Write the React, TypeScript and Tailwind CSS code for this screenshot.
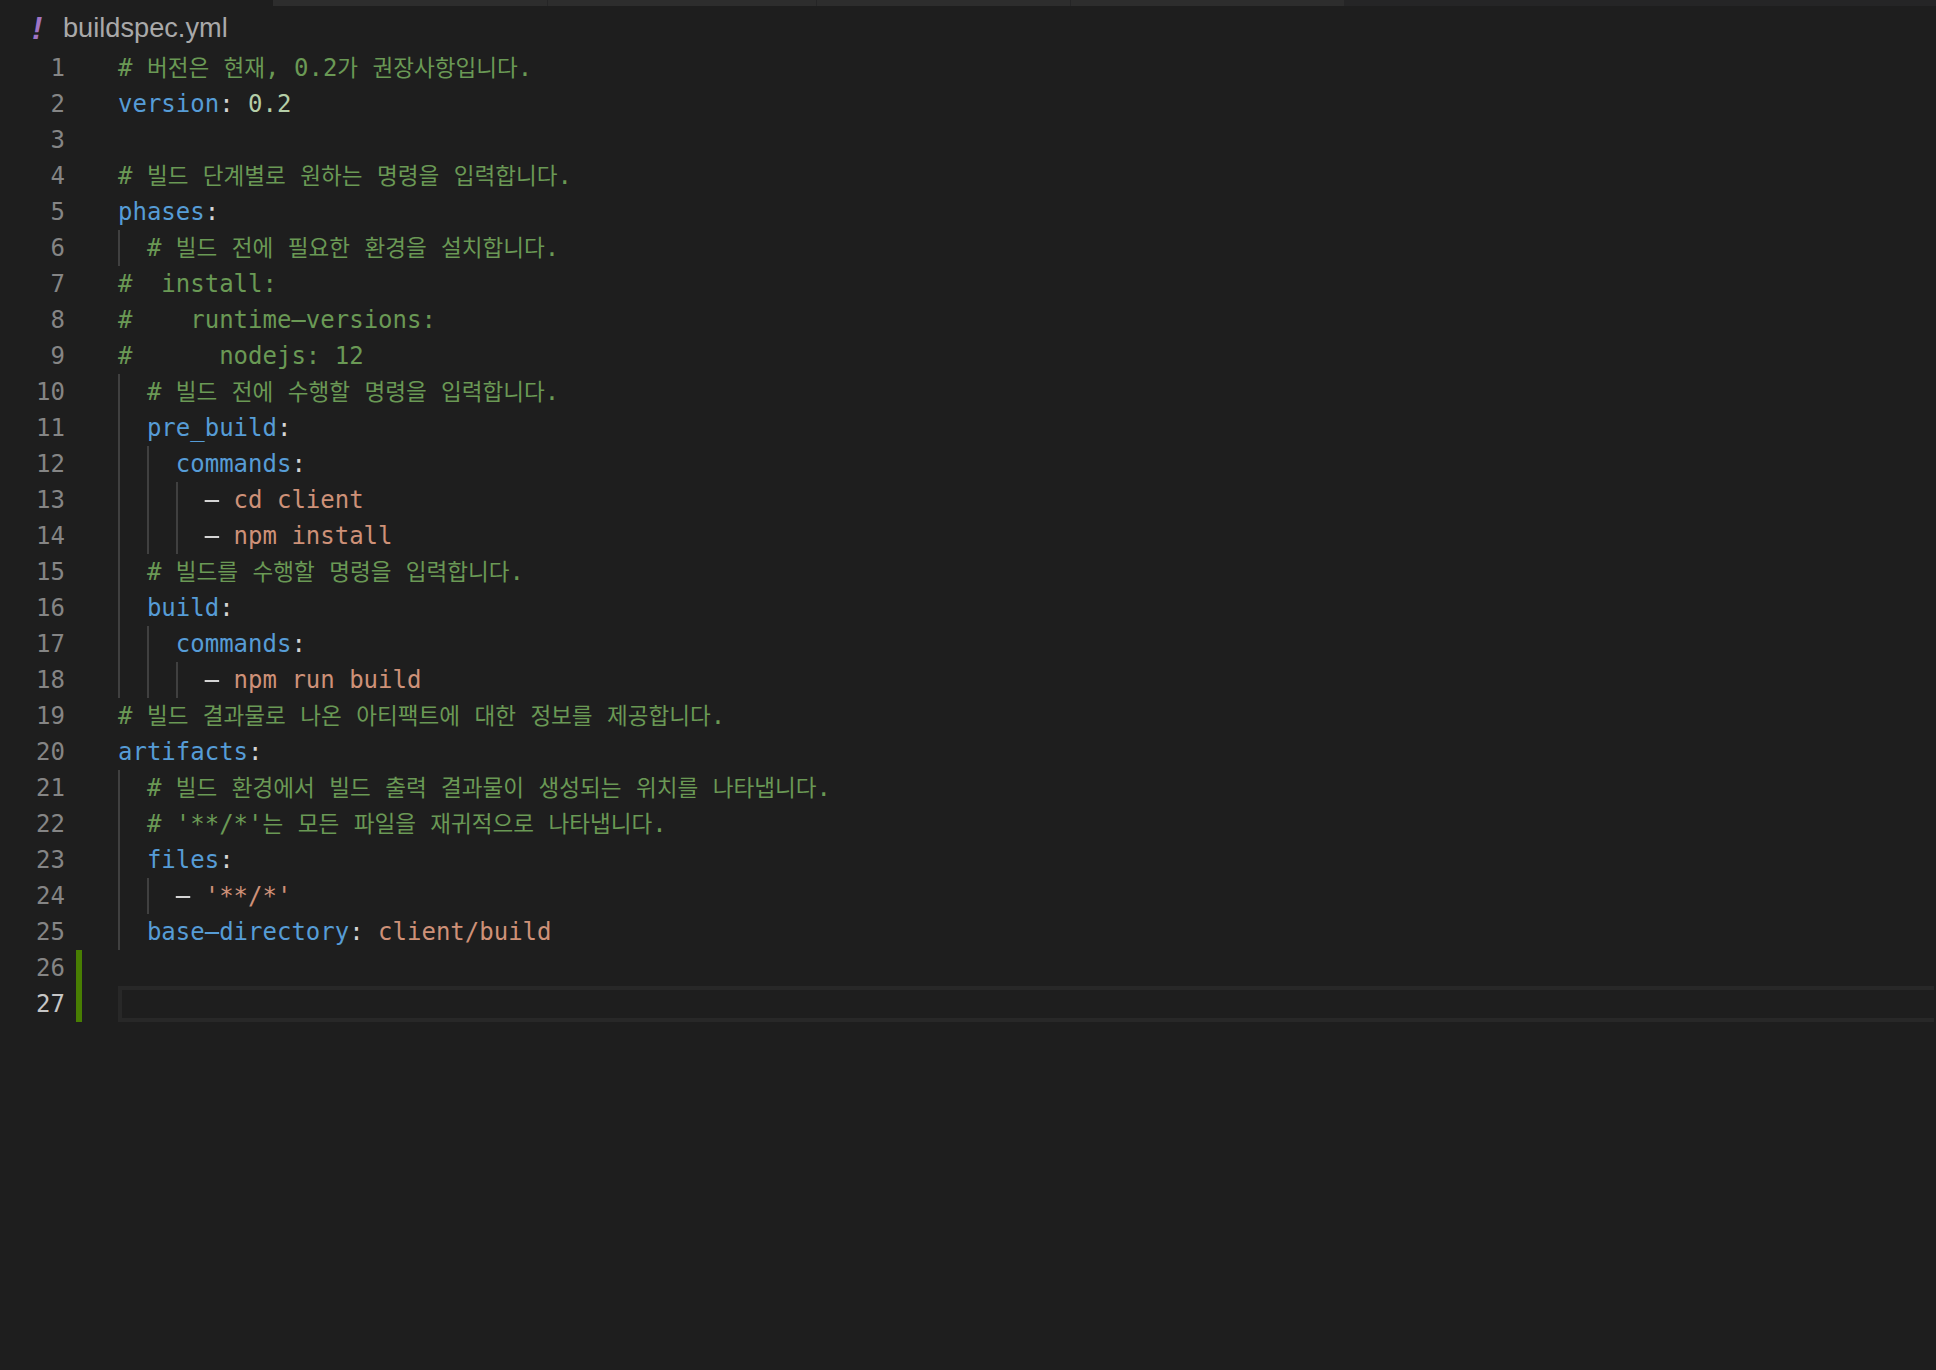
import React from "react";

const K = "text-[#569cd6]";
const C = "text-[#6a9955]";
const P = "text-[#d4d4d4]";
const S = "text-[#ce9178]";
const N = "text-[#b5cea8]";

type Seg = [string, string];
type Line = { guides?: number; parts?: Seg[] };

const lines: Line[] = [
  { parts: [["# 버전은 현재, 0.2가 권장사항입니다.", C]] },
  { parts: [["version", K], [": ", P], ["0.2", N]] },
  {},
  { parts: [["# 빌드 단계별로 원하는 명령을 입력합니다.", C]] },
  { parts: [["phases", K], [":", P]] },
  { guides: 1, parts: [["# 빌드 전에 필요한 환경을 설치합니다.", C]] },
  { parts: [["#  install:", C]] },
  { parts: [["#    runtime-versions:", C]] },
  { parts: [["#      nodejs: 12", C]] },
  { guides: 1, parts: [["# 빌드 전에 수행할 명령을 입력합니다.", C]] },
  { guides: 1, parts: [["pre_build", K], [":", P]] },
  { guides: 2, parts: [["commands", K], [":", P]] },
  { guides: 3, parts: [["- ", P], ["cd client", S]] },
  { guides: 3, parts: [["- ", P], ["npm install", S]] },
  { guides: 1, parts: [["# 빌드를 수행할 명령을 입력합니다.", C]] },
  { guides: 1, parts: [["build", K], [":", P]] },
  { guides: 2, parts: [["commands", K], [":", P]] },
  { guides: 3, parts: [["- ", P], ["npm run build", S]] },
  { parts: [["# 빌드 결과물로 나온 아티팩트에 대한 정보를 제공합니다.", C]] },
  { parts: [["artifacts", K], [":", P]] },
  { guides: 1, parts: [["# 빌드 환경에서 빌드 출력 결과물이 생성되는 위치를 나타냅니다.", C]] },
  { guides: 1, parts: [["# '**/*'는 모든 파일을 재귀적으로 나타냅니다.", C]] },
  { guides: 1, parts: [["files", K], [":", P]] },
  { guides: 2, parts: [["- ", P], ["'**/*'", S]] },
  { guides: 1, parts: [["base-directory", K], [": ", P], ["client/build", S]] },
  {},
  {},
];

function Runs({ text }: { text: string }) {
  const runs = text.split(/([\uac00-\ud7a3]+|-)/);
  return (
    <>
      {runs.map((r, i) =>
        i % 2 === 0 ? (
          <span key={i}>{r}</span>
        ) : r === "-" ? (
          <span key={i} className="line-through decoration-2">
            {r}
          </span>
        ) : (
          <span key={i} className="font-['Noto_Sans_CJK_KR',sans-serif] text-[22.55px] leading-[0]">
            {r}
          </span>
        )
      )}
    </>
  );
}

export default function App() {
  return (
    <div className="h-[1370px] w-[1936px] overflow-hidden bg-[#1e1e1e]">
      <div className="flex h-[6px] bg-[#252526]">
        <div className="w-[273px] bg-[#1e1e1e]" />
        <div className="w-[275px] border-r border-[#252526] bg-[#2d2d2d]" />
        <div className="w-[269px] border-r border-[#252526] bg-[#2d2d2d]" />
        <div className="w-[254px] border-r border-[#252526] bg-[#2d2d2d]" />
        <div className="w-[273px] bg-[#2d2d2d]" />
      </div>
      <div className="flex h-[44px] items-center">
        <span className="ml-[32px] w-[31px] font-['Liberation_Sans',sans-serif] text-[31px] font-bold italic leading-none text-[#a074c4]">
          !
        </span>
        <span className="font-['Liberation_Sans',sans-serif] text-[27.2px] leading-none text-[#a9a9a9]">
          buildspec.yml
        </span>
      </div>
      <div className="font-['DejaVu_Sans_Mono','Noto_Sans_CJK_KR',monospace] text-[24px] leading-[36px]">
        {lines.map((l, i) => {
          const n = i + 1;
          const active = n === 27;
          const changed = n >= 26;
          const guides = Array.from({ length: l.guides ?? 0 });
          return (
            <div key={n} className="flex h-[36px] whitespace-pre">
              <div
                className={`w-[65px] text-right ${active ? "text-[#c6c6c6]" : "text-[#858585]"}`}
              >
                {n}
              </div>
              <div className="ml-[11px] w-[6px]">
                {changed && <div className="h-full bg-[#487e02]" />}
              </div>
              {active ? (
                <div className="ml-[36px] w-[1816px] border-4 border-r-0 border-[#282828]" />
              ) : (
                <div className="ml-[36px] flex">
                  {guides.map((_, g) => (
                    <div key={g} className="w-[28.9px] border-l-2 border-[#404040]" />
                  ))}
                  <div>
                    {l.parts?.map(([t, c], j) => (
                      <span key={j} className={c}>
                        <Runs text={t} />
                      </span>
                    ))}
                  </div>
                </div>
              )}
            </div>
          );
        })}
      </div>
    </div>
  );
}
